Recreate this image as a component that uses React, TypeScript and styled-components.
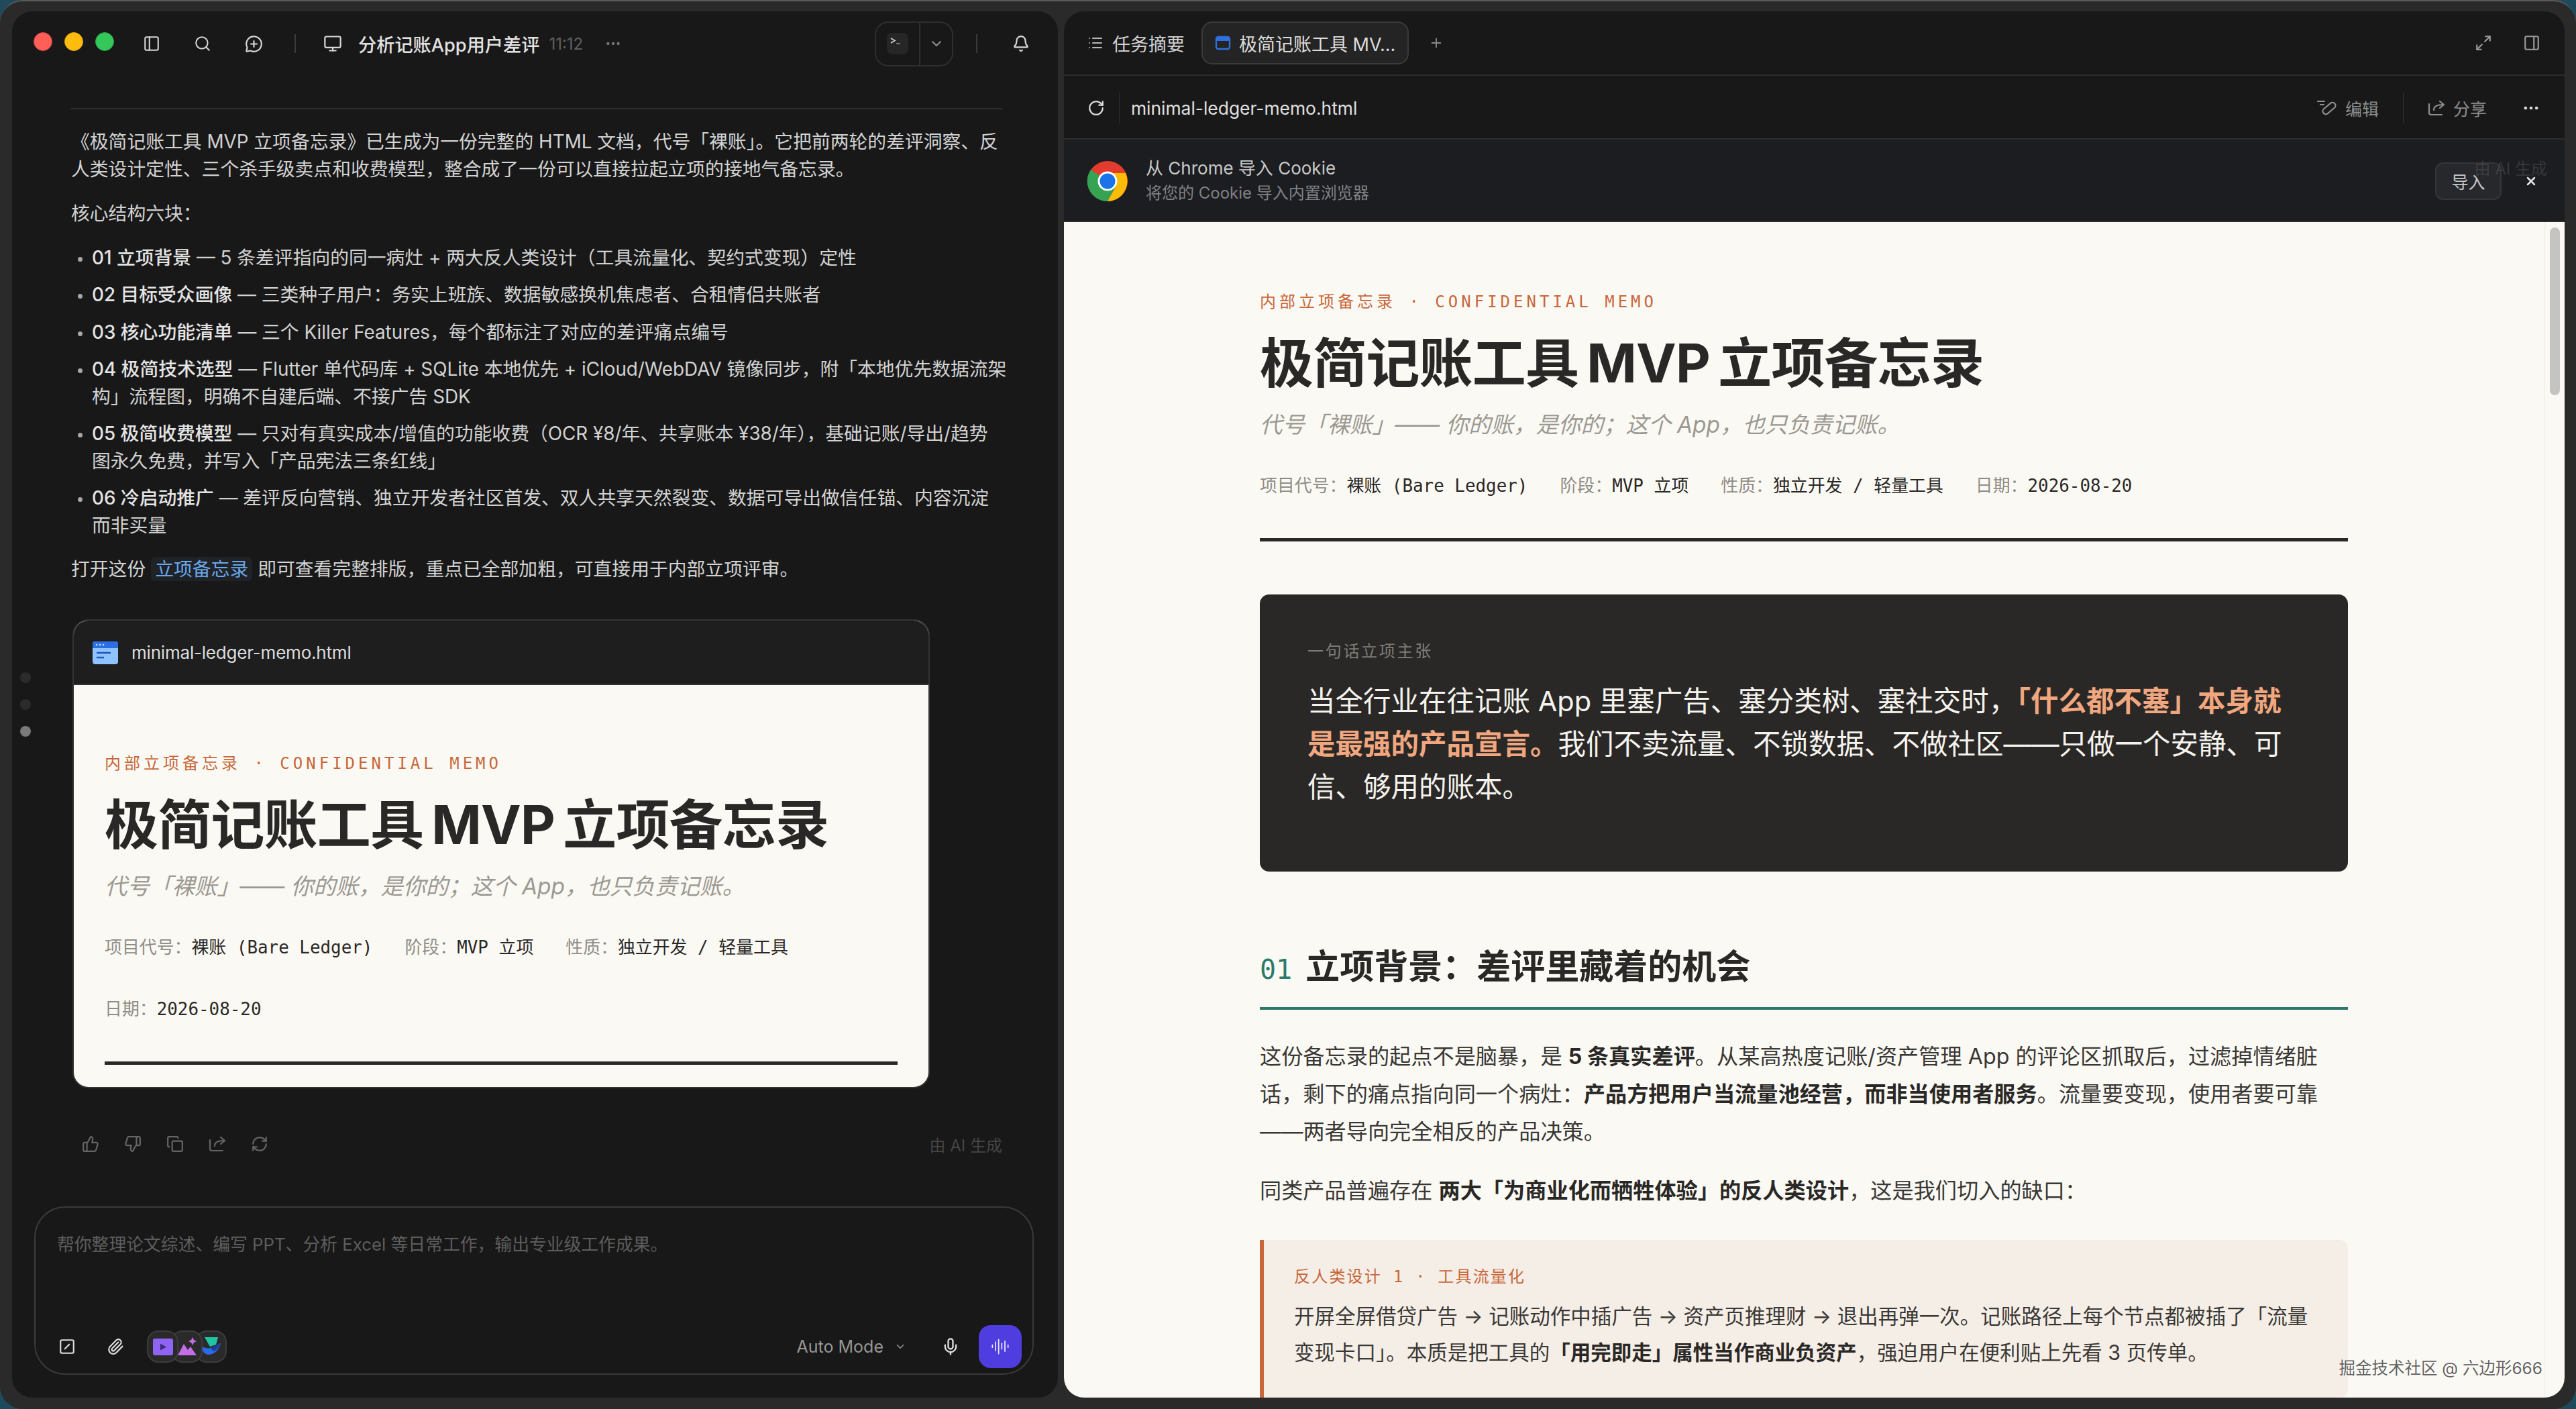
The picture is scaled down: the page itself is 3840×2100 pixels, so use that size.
import React from 'react';
import styled, { createGlobalStyle } from 'styled-components';
import {
  AudioLines,
  Bell,
  ChevronDown,
  Copy,
  Ellipsis,
  List,
  Maximize2,
  MessageCirclePlus,
  Mic,
  Monitor,
  PanelLeft,
  PanelRight,
  Paperclip,
  Plus,
  RefreshCw,
  RotateCw,
  Search,
  SquareSlash,
  ThumbsDown,
  ThumbsUp,
  X,
} from 'lucide-react';

const sans = `Inter, "Noto Sans CJK SC", sans-serif`;
const mono = `"DejaVu Sans Mono", "Noto Sans CJK SC", monospace`;

const GlobalStyle = createGlobalStyle`
  html, body {
    margin: 0;
    background: #1f4a5c;
  }
  * {
    box-sizing: border-box;
  }
`;

const Desktop = styled.div`
  width: 3840px;
  height: 2100px;
  display: flex;
  gap: 9px;
  padding: 15px 17px 17px 18px;
  background: #2a2a2a;
  border-top: 2px solid #5a5a5a;
  border-radius: 34px;
  font-family: ${sans};
  overflow: hidden;
`;

const ChatPanel = styled.section`
  position: relative;
  width: 1559px;
  display: flex;
  flex-direction: column;
  background: #181818;
  border-radius: 30px;
  overflow: hidden;
`;

const TopBar = styled.header`
  height: 92px;
  flex-shrink: 0;
  display: flex;
  align-items: center;
  justify-content: space-between;
  padding: 4px 42px 0 32px;
`;

const BarGroup = styled.div`
  display: flex;
  align-items: center;
`;

const Light = styled.span<{ $color: string; $edge: string }>`
  width: 28px;
  height: 28px;
  margin: 0 18px 6px 0;
  border-radius: 50%;
  background: ${p => p.$color};
  border: 1px solid ${p => p.$edge};
`;

const BarIcon = styled.span<{ $before?: number; $after?: number; $muted?: boolean }>`
  display: flex;
  color: ${p => (p.$muted ? '#777' : '#d8d8d8')};
  margin-left: ${p => p.$before ?? 0}px;
  margin-right: ${p => p.$after ?? 0}px;
`;

const BarRule = styled.span`
  width: 2px;
  height: 28px;
  background: #3a3a3a;
`;

const ChatTitle = styled.span`
  margin-left: 24px;
  font-size: 27.2px;
  font-weight: 500;
  color: #e2e2e2;
`;

const ChatTime = styled.span`
  margin-left: 14px;
  font-size: 24px;
  color: #5f5f5f;
`;

const TerminalSwitch = styled.div`
  width: 117px;
  height: 67px;
  margin-right: 34px;
  display: grid;
  grid-template-columns: 64px 1fr;
  border: 2px solid #2e2e2e;
  border-radius: 20px;
`;

const TerminalCell = styled.div`
  display: flex;
  align-items: center;
  justify-content: center;
  color: #8f8f8f;
  & + & {
    border-left: 2px solid #2e2e2e;
  }
`;

const Conversation = styled.div`
  padding: 52px 83px 0 88px;
  color: #d2d2d2;
  font-size: 27.8px;
  line-height: 40.5px;
`;

const TopRule = styled.div`
  height: 2px;
  background: #2c2c2c;
  margin-bottom: 28px;
`;

const Para = styled.p<{ $top?: number }>`
  margin: ${p => p.$top ?? 0}px 0 0;
`;

const Points = styled.ul`
  margin: 25px -8px 0 0;
  padding: 0 0 0 31px;
  color: #d2d2d2;
  white-space: pre-line;
`;

const Point = styled.li`
  margin-bottom: 15px;
  &::marker {
    color: #a8a8a8;
    font-size: 22px;
  }
  &:last-child {
    margin-bottom: 0;
  }
`;

const PointHead = styled.span`
  font-weight: 500;
  color: #e4e4e4;
`;

const DocLink = styled.span`
  display: inline-block;
  padding: 0 6px;
  margin: 0 8px;
  line-height: 36px;
  border-radius: 6px;
  background: #1f2226;
  color: #6aa8ea;
`;

const FileCard = styled.article`
  margin: 54px 0 0 2px;
  width: 1278px;
  border: 2px solid #343434;
  border-radius: 24px;
  overflow: hidden;
  background: #fbf9f4;
`;

const FileHead = styled.div`
  height: 96px;
  display: flex;
  align-items: center;
  gap: 20px;
  padding: 3px 0 0 28px;
  background: #1e1e1e;
  border-bottom: 2px solid #333;
  color: #dcdcdc;
  font-size: 26px;
  letter-spacing: -0.2px;
`;

const FileBody = styled.div`
  padding: 102px 46px 33px;
`;

const Eyebrow = styled.div`
  font-family: ${mono};
  font-size: 24px;
  line-height: 30px;
  letter-spacing: 5px;
  color: #c8673a;
`;

const MemoTitle = styled.h1`
  margin: 31px 0 0;
  font-size: 80px;
  line-height: 90px;
  letter-spacing: -0.8px;
  word-spacing: -6px;
  font-weight: 700;
  color: #2a2826;
  white-space: nowrap;
`;

const MemoSub = styled.div`
  margin-top: 23px;
  font-size: 33.5px;
  line-height: 48px;
  font-style: italic;
  color: #9b9992;
`;

const Meta = styled.div`
  margin-top: 49px;
  display: flex;
  flex-wrap: wrap;
  gap: 56px 48px;
  font-family: ${mono};
  font-size: 25.9px;
  line-height: 36px;
  color: #8f8d86;
`;

const MetaValue = styled.span`
  color: #2a2826;
`;

const HeavyRule = styled.div`
  margin-top: 60px;
  height: 5px;
  background: #2a2826;
`;

const ScrollDots = styled.div`
  position: absolute;
  left: 12px;
  top: 985px;
  display: flex;
  flex-direction: column;
  gap: 24px;
`;

const ScrollDot = styled.span<{ $on?: boolean }>`
  width: 16px;
  height: 16px;
  border-radius: 50%;
  background: ${p => (p.$on ? '#7a7a7a' : '#2b2b2b')};
`;

const Actions = styled.div`
  margin: 66px 83px 0 104px;
  display: flex;
  align-items: center;
  gap: 37px;
  color: #666;
`;

const Generated = styled.span`
  margin-left: auto;
  font-size: 24px;
  color: #454545;
`;

const InputBox = styled.div`
  margin: auto 36px 34px 33px;
  height: 251px;
  display: flex;
  flex-direction: column;
  justify-content: space-between;
  padding: 40px 16px 8px 32px;
  border: 2px solid #3a3a3a;
  border-radius: 46px;
`;

const Placeholder = styled.div`
  font-size: 25.8px;
  line-height: 30px;
  color: #5d5d5d;
`;

const InputTools = styled.div`
  display: flex;
  align-items: center;
`;

const ToolIcon = styled.span<{ $before?: number; $after?: number }>`
  display: flex;
  color: #dedede;
  margin-left: ${p => p.$before ?? 0}px;
  margin-right: ${p => p.$after ?? 0}px;
`;

const AppChip = styled.span<{ $layer: number }>`
  position: relative;
  z-index: ${p => p.$layer};
  width: 47px;
  height: 48px;
  margin-right: -11px;
  display: flex;
  align-items: center;
  justify-content: center;
  border: 2px solid #3c3c3c;
  border-radius: 17px;
  background: #2a2a2a;
`;

const ModePicker = styled.div`
  margin-left: auto;
  margin-right: 52px;
  display: flex;
  align-items: center;
  gap: 16px;
  color: #979797;
  font-size: 25px;
`;

const SendButton = styled.button`
  width: 64px;
  height: 64px;
  margin-left: 28px;
  display: flex;
  align-items: center;
  justify-content: center;
  border: 0;
  border-radius: 18px;
  background: #4f3de0;
  color: #e8e6ff;
`;

const DocPanel = styled.section`
  position: relative;
  flex: 1;
  display: flex;
  flex-direction: column;
  background: #181818;
  border-radius: 30px;
  overflow: hidden;
`;

const TabRow = styled.div`
  height: 96px;
  flex-shrink: 0;
  display: flex;
  align-items: center;
  padding: 0 36px 0 35px;
  border-bottom: 2px solid #2c2c2c;
`;

const PlainTab = styled.div`
  display: flex;
  align-items: center;
  gap: 13px;
  color: #d0d0d0;
  font-size: 27px;
`;

const ActiveTab = styled.div`
  width: 309px;
  height: 64px;
  margin-left: 25px;
  display: flex;
  align-items: center;
  gap: 12px;
  padding-left: 18px;
  background: #242424;
  border: 2px solid #3a3a3a;
  border-radius: 16px;
  color: #dcdcdc;
  font-size: 27px;
  white-space: nowrap;
`;

const AddTab = styled.span`
  display: flex;
  margin-left: 30px;
  color: #8a8a8a;
`;

const RightTools = styled.div<{ $gap: number }>`
  margin-left: auto;
  display: flex;
  align-items: center;
  gap: ${p => p.$gap}px;
  color: #9a9a9a;
`;

const UrlRow = styled.div`
  height: 95px;
  flex-shrink: 0;
  display: flex;
  align-items: center;
  padding: 2px 36px 0 35px;
  border-bottom: 2px solid #2c2c2c;
  color: #e0e0e0;
  font-size: 26.4px;
`;

const UrlRule = styled.span`
  width: 1px;
  height: 46px;
  margin: 0 17px 0 21px;
  background: #2c2c2c;
`;

const ToolRule = styled.span`
  width: 1px;
  height: 46px;
  background: #333;
`;

const ToolLabel = styled.span`
  display: flex;
  align-items: center;
  gap: 12px;
  font-size: 25px;
  color: #8e8e8e;
`;

const MoreTools = styled.span`
  display: flex;
  margin-left: 16px;
  color: #dcdcdc;
`;

const CookieRow = styled.div`
  position: relative;
  height: 123px;
  flex-shrink: 0;
  display: flex;
  align-items: center;
  gap: 26px;
  padding: 2px 40px 0 34px;
  background: #1c1d20;
  border-bottom: 2px solid #2c2c2c;
`;

const ChromeMark = styled.span`
  display: flex;
  flex-shrink: 0;
`;

const CookieText = styled.div`
  display: flex;
  flex-direction: column;
  gap: 5px;
  font-size: 26px;
  line-height: 32px;
  color: #c9c9c9;
`;

const CookieSub = styled.span`
  font-size: 24px;
  color: #808184;
`;

const ImportButton = styled.button`
  width: 99px;
  height: 56px;
  margin-left: auto;
  margin-right: 8px;
  background: #26282c;
  border: 2px solid #34363a;
  border-radius: 12px;
  color: #c8c8c8;
  font-family: ${sans};
  font-size: 25px;
`;

const CloseCookie = styled.span`
  display: flex;
  color: #e6e6e6;
`;

const GhostLabel = styled.span`
  position: absolute;
  right: 26px;
  top: 24px;
  font-size: 24px;
  color: rgba(90, 90, 90, 0.45);
`;

const ViewerRow = styled.div`
  flex: 1;
  min-height: 0;
  display: flex;
  background: #fbf9f4;
`;

const Doc = styled.div`
  flex: 1;
  min-width: 0;
  padding: 104px 293px 0 292px;
  overflow: hidden;
`;

const ScrollTrack = styled.div`
  width: 30px;
  flex-shrink: 0;
  padding: 8px 7px 0;
  border-left: 1px solid #ecebe6;
`;

const ScrollThumb = styled.div`
  height: 250px;
  border-radius: 8px;
  background: #c4c4c2;
`;

const Pitch = styled.div`
  margin-top: 79px;
  padding: 70px 71px 94px;
  background: #2a2826;
  border-radius: 14px;
`;

const PitchLabel = styled.div`
  font-family: ${mono};
  font-size: 24px;
  line-height: 30px;
  letter-spacing: 2.7px;
  color: #7f7d78;
`;

const PitchText = styled.div`
  margin-top: 27px;
  font-size: 41.5px;
  line-height: 64px;
  color: #f5f3ee;
`;

const PitchMark = styled.strong`
  font-weight: 700;
  color: #f0a77f;
`;

const SectionTitle = styled.h2`
  display: flex;
  align-items: baseline;
  gap: 20px;
  margin: 107px 0 0;
  padding-bottom: 21px;
  border-bottom: 4px solid #2c7a6b;
  font-size: 51px;
  line-height: 70px;
  font-weight: 700;
  color: #2a2826;
`;

const SectionNum = styled.span`
  font-family: ${mono};
  font-size: 40px;
  font-weight: 400;
  color: #2c7a6b;
`;

const BodyText = styled.p<{ $top: number }>`
  margin: ${p => p.$top}px 0 0;
  font-size: 32.2px;
  line-height: 56px;
  color: #3a3835;
`;

const Strong = styled.strong`
  font-weight: 700;
  color: #2a2826;
`;

const Callout = styled.div`
  margin-top: 45px;
  padding: 40px 48px 40px 45px;
  background: #f5eee7;
  border-left: 6px solid #c8673a;
  border-radius: 0 12px 12px 0;
`;

const CalloutLabel = styled.div`
  font-family: ${mono};
  font-size: 24px;
  line-height: 30px;
  letter-spacing: 2.2px;
  color: #c8673a;
`;

const CalloutText = styled.p`
  margin: 17px 0 0;
  font-size: 30.5px;
  line-height: 54px;
  color: #3a3835;
`;

const Watermark = styled.span`
  position: absolute;
  right: 33px;
  bottom: 28px;
  font-size: 24.5px;
  color: rgba(70, 70, 70, 0.85);
  text-shadow: 0 0 3px rgba(255, 255, 255, 0.9);
`;

const ChromeLogo = () => (
  <svg width="62" height="62" viewBox="0 0 62 62">
    <circle cx="31" cy="31" r="30" fill="#e33b2e" />
    <path d="M31 31 L6 14 A30 30 0 0 0 31 61 L44 38 Z" fill="#34a353" />
    <path d="M31 19 L58 19 A30 30 0 0 1 31 61 L44 38 Z" fill="#fbbc05" />
    <circle cx="31" cy="31" r="14.5" fill="#fff" />
    <circle cx="31" cy="31" r="11.5" fill="#1a73e8" />
  </svg>
);

const HtmlFileIcon = () => (
  <svg width="38" height="34" viewBox="0 0 38 34">
    <rect width="38" height="34" rx="4" fill="#8fc3ff" />
    <path d="M0 4a4 4 0 0 1 4-4h30a4 4 0 0 1 4 4v6H0z" fill="#2c6fe4" />
    <circle cx="6" cy="5" r="1.3" fill="#cfe2ff" />
    <circle cx="11" cy="5" r="1.3" fill="#cfe2ff" />
    <circle cx="16" cy="5" r="1.3" fill="#cfe2ff" />
    <path d="M6 17h21M6 24h11" stroke="#1f57b8" strokeWidth="2.6" />
  </svg>
);

const TabFileIcon = () => (
  <svg width="24" height="24" viewBox="0 0 24 24" fill="none">
    <rect x="2" y="3" width="20" height="18" rx="3" stroke="#2f6fe0" strokeWidth="2.4" />
    <path d="M2 6a3 3 0 0 1 3-3h14a3 3 0 0 1 3 3v3H2z" fill="#2f6fe0" />
  </svg>
);

const TerminalTile = () => (
  <svg width="32" height="32" viewBox="0 0 32 32" fill="none">
    <rect width="32" height="32" rx="8" fill="#262626" />
    <path d="M6 8l6 3.5L6 15" stroke="#d8d8d8" strokeWidth="1.6" />
    <path d="M14 16h6" stroke="#777" strokeWidth="1.8" />
  </svg>
);

const EditIcon = () => (
  <svg width="30" height="26" viewBox="0 0 30 26" fill="none" stroke="#8e8e8e" strokeWidth="2.2" strokeLinecap="round">
    <path d="M1 3h10M5 8h5" />
    <rect x="7" y="9" width="22" height="9" rx="4.5" transform="rotate(-40 18 13.5)" />
  </svg>
);

// corner tray with an arrow leaving it, used by 分享 and the message actions
const ShareIcon = ({ size = 26 }: { size?: number }) => (
  <svg width={size} height={size} viewBox="0 0 26 26" fill="none" stroke="currentColor" strokeWidth="2.2" strokeLinecap="round" strokeLinejoin="round">
    <path d="M2 7v13a3 3 0 0 0 3 3h16" />
    <path d="M9 16c0-5 4-8 14-8" />
    <path d="M18 3l6 5-6 5" />
  </svg>
);

const VideoAppIcon = () => (
  <svg width="30" height="25" viewBox="0 0 30 25">
    <rect width="30" height="25" rx="3" fill="#8f64f5" />
    <path d="M11 7.5l9 5-9 5z" fill="#3d2a7a" />
  </svg>
);

const ImageAppIcon = () => (
  <svg width="30" height="30" viewBox="0 0 30 30">
    <path d="M1 28L10 11l6 9 4-5 9 13z" fill="#c26ee6" />
    <path d="M23 1l2 4 4 2-4 2-2 4-2-4-4-2 4-2z" fill="#c26ee6" />
  </svg>
);

const WaveAppIcon = () => (
  <svg width="30" height="30" viewBox="0 0 30 30">
    <path d="M5 1h20l-3 11-9 3z" fill="#1fc6a6" />
    <path d="M1 15c5 2 9 3 13 2 4-1 9-5 15-7-2 9-9 17-18 17-6 0-10-5-10-12z" fill="#2a6be8" />
    <path d="M14 17c4-1 9-5 15-7-2 5-5 9-9 12-3-1-5-3-6-5z" fill="#1f3f96" />
  </svg>
);

const MemoHeader = () => (
  <>
    <Eyebrow>内部立项备忘录 · CONFIDENTIAL MEMO</Eyebrow>
    <MemoTitle>极简记账工具 MVP 立项备忘录</MemoTitle>
    <MemoSub>代号「裸账」—— 你的账，是你的；这个 App，也只负责记账。</MemoSub>
    <Meta>
      <span>项目代号：<MetaValue>裸账 (Bare Ledger)</MetaValue></span>
      <span>阶段：<MetaValue>MVP 立项</MetaValue></span>
      <span>性质：<MetaValue>独立开发 / 轻量工具</MetaValue></span>
      <span>日期：<MetaValue>2026-08-20</MetaValue></span>
    </Meta>
    <HeavyRule />
  </>
);

const points = [
  ['01 立项背景', ' — 5 条差评指向的同一病灶 + 两大反人类设计（工具流量化、契约式变现）定性'],
  ['02 目标受众画像', ' — 三类种子用户：务实上班族、数据敏感换机焦虑者、合租情侣共账者'],
  ['03 核心功能清单', ' — 三个 Killer Features，每个都标注了对应的差评痛点编号'],
  ['04 极简技术选型', ' — Flutter 单代码库 + SQLite 本地优先 + iCloud/WebDAV 镜像同步，附「本地优先数据流架\n构」流程图，明确不自建后端、不接广告 SDK'],
  ['05 极简收费模型', ' — 只对有真实成本/增值的功能收费（OCR ¥8/年、共享账本 ¥38/年），基础记账/导出/趋势\n图永久免费，并写入「产品宪法三条红线」'],
  ['06 冷启动推广', ' — 差评反向营销、独立开发者社区首发、双人共享天然裂变、数据可导出做信任锚、内容沉淀\n而非买量'],
];

export default function App() {
  return (
    <Desktop>
      <GlobalStyle />
      <ChatPanel>
        <TopBar>
          <BarGroup>
            <Light $color="#ff5f57" $edge="#d8404a" />
            <Light $color="#febc0e" $edge="#e0a500" />
            <Light $color="#34c759" $edge="#2aa548" />
            <BarIcon $before={25} $after={50}><PanelLeft size={26} strokeWidth={1.9} /></BarIcon>
            <BarIcon $after={50}><Search size={26} strokeWidth={1.9} /></BarIcon>
            <BarIcon $after={47}><MessageCirclePlus size={27} strokeWidth={1.9} /></BarIcon>
            <BarRule />
            <BarIcon $before={41}><Monitor size={28} strokeWidth={1.9} /></BarIcon>
            <ChatTitle>分析记账App用户差评</ChatTitle>
            <ChatTime>11:12</ChatTime>
            <BarIcon $before={32} $muted><Ellipsis size={26} /></BarIcon>
          </BarGroup>
          <BarGroup>
            <TerminalSwitch>
              <TerminalCell><TerminalTile /></TerminalCell>
              <TerminalCell><ChevronDown size={24} /></TerminalCell>
            </TerminalSwitch>
            <BarRule />
            <BarIcon $before={52}><Bell size={26} strokeWidth={2} /></BarIcon>
          </BarGroup>
        </TopBar>

        <Conversation>
          <TopRule />
          <Para>《极简记账工具 MVP 立项备忘录》已生成为一份完整的 HTML 文档，代号「裸账」。它把前两轮的差评洞察、反人类设计定性、三个杀手级卖点和收费模型，整合成了一份可以直接拉起立项的接地气备忘录。</Para>
          <Para $top={26}>核心结构六块：</Para>
          <Points>
            {points.map(([head, rest]) => (
              <Point key={head}><PointHead>{head}</PointHead>{rest}</Point>
            ))}
          </Points>
          <Para $top={25}>打开这份<DocLink>立项备忘录</DocLink>即可查看完整排版，重点已全部加粗，可直接用于内部立项评审。</Para>

          <FileCard>
            <FileHead><HtmlFileIcon />minimal-ledger-memo.html</FileHead>
            <FileBody><MemoHeader /></FileBody>
          </FileCard>
        </Conversation>

        <ScrollDots>
          <ScrollDot />
          <ScrollDot />
          <ScrollDot $on />
        </ScrollDots>

        <Actions>
          <ThumbsUp size={26} />
          <ThumbsDown size={26} />
          <Copy size={26} />
          <ShareIcon />
          <RefreshCw size={26} />
          <Generated>由 AI 生成</Generated>
        </Actions>

        <InputBox>
          <Placeholder>帮你整理论文综述、编写 PPT、分析 Excel 等日常工作，输出专业级工作成果。</Placeholder>
          <InputTools>
            <ToolIcon $before={2} $after={46}><SquareSlash size={26} /></ToolIcon>
            <ToolIcon $after={34}><Paperclip size={26} /></ToolIcon>
            <AppChip $layer={3}><VideoAppIcon /></AppChip>
            <AppChip $layer={2}><ImageAppIcon /></AppChip>
            <AppChip $layer={1}><WaveAppIcon /></AppChip>
            <ModePicker>Auto Mode <ChevronDown size={18} /></ModePicker>
            <ToolIcon><Mic size={28} /></ToolIcon>
            <SendButton><AudioLines size={28} strokeWidth={1.5} /></SendButton>
          </InputTools>
        </InputBox>
      </ChatPanel>

      <DocPanel>
        <TabRow>
          <PlainTab><List size={24} color="#b8b8b8" />任务摘要</PlainTab>
          <ActiveTab><TabFileIcon />极简记账工具 MV...</ActiveTab>
          <AddTab><Plus size={22} /></AddTab>
          <RightTools $gap={46}>
            <Maximize2 size={26} />
            <PanelRight size={26} />
          </RightTools>
        </TabRow>

        <UrlRow>
          <RotateCw size={26} />
          <UrlRule />
          minimal-ledger-memo.html
          <RightTools $gap={36}>
            <ToolLabel><EditIcon />编辑</ToolLabel>
            <ToolRule />
            <ToolLabel><ShareIcon />分享</ToolLabel>
            <MoreTools><Ellipsis size={28} /></MoreTools>
          </RightTools>
        </UrlRow>

        <CookieRow>
          <ChromeMark><ChromeLogo /></ChromeMark>
          <CookieText>
            从 Chrome 导入 Cookie
            <CookieSub>将您的 Cookie 导入内置浏览器</CookieSub>
          </CookieText>
          <ImportButton>导入</ImportButton>
          <CloseCookie><X size={20} strokeWidth={3} /></CloseCookie>
          <GhostLabel>由 AI 生成</GhostLabel>
        </CookieRow>

        <ViewerRow>
          <Doc>
            <MemoHeader />
            <Pitch>
              <PitchLabel>一句话立项主张</PitchLabel>
              <PitchText>
                当全行业在往记账 App 里塞广告、塞分类树、塞社交时，<PitchMark>「什么都不塞」本身就是最强的产品宣言。</PitchMark>我们不卖流量、不锁数据、不做社区——只做一个安静、可信、够用的账本。
              </PitchText>
            </Pitch>
            <SectionTitle><SectionNum>01</SectionNum>立项背景：差评里藏着的机会</SectionTitle>
            <BodyText $top={42}>
              这份备忘录的起点不是脑暴，是 <Strong>5 条真实差评</Strong>。从某高热度记账/资产管理 App 的评论区抓取后，过滤掉情绪脏话，剩下的痛点指向同一个病灶：<Strong>产品方把用户当流量池经营，而非当使用者服务</Strong>。流量要变现，使用者要可靠——两者导向完全相反的产品决策。
            </BodyText>
            <BodyText $top={32}>
              同类产品普遍存在 <Strong>两大「为商业化而牺牲体验」的反人类设计</Strong>，这是我们切入的缺口：
            </BodyText>
            <Callout>
              <CalloutLabel>反人类设计 1 · 工具流量化</CalloutLabel>
              <CalloutText>
                开屏全屏借贷广告 → 记账动作中插广告 → 资产页推理财 → 退出再弹一次。记账路径上每个节点都被插了「流量变现卡口」。本质是把工具的<Strong>「用完即走」属性当作商业负资产</Strong>，强迫用户在便利贴上先看 3 页传单。
              </CalloutText>
            </Callout>
          </Doc>
          <ScrollTrack><ScrollThumb /></ScrollTrack>
        </ViewerRow>
        <Watermark>掘金技术社区 @ 六边形666</Watermark>
      </DocPanel>
    </Desktop>
  );
}
